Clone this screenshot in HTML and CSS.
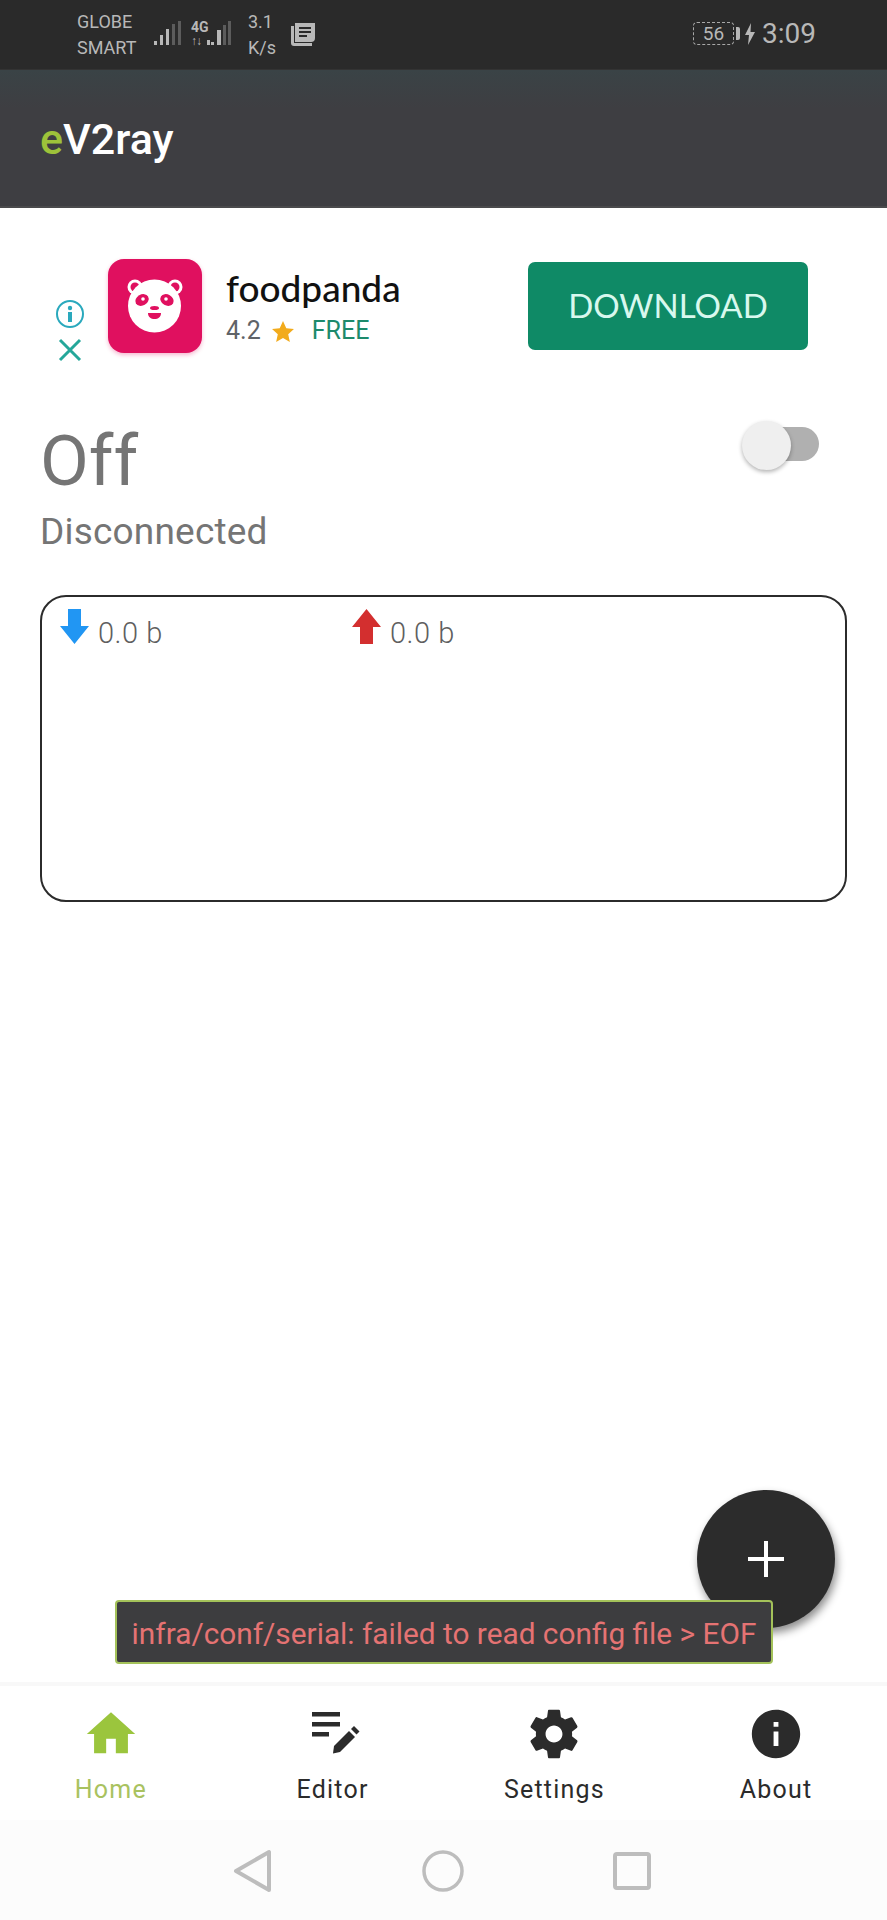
FILE: index.html
```html
<!DOCTYPE html>
<html lang="en">
<head>
  <meta charset="UTF-8">
  <meta name="viewport" content="width=device-width, initial-scale=1.0">
  <title>eV2ray</title>
  <link rel="stylesheet" href="styles.css">
</head>
<body>
  <div class="page">
    <div class="statusbar">
      <div class="carriers">
        <span>GLOBE</span>
        <span>SMART</span>
      </div>
      <svg class="signal" width="28" height="26" viewBox="0 0 28 26">
        <g fill="#b8b8b8">
          <rect x="0" y="20" width="3" height="4"/>
          <rect x="6" y="14" width="3" height="10"/>
          <rect x="12" y="8" width="3" height="16"/>
        </g>
        <g fill="#5c5c5c">
          <rect x="18" y="3" width="3" height="21"/>
          <rect x="24" y="0" width="3" height="24"/>
        </g>
      </svg>
      <div class="net-type">
        <span class="net-4g">4G</span>
        <span class="net-arrows">↑↓</span>
      </div>
      <svg class="signal-2" width="25" height="26" viewBox="0 0 25 26">
        <g fill="#b8b8b8">
          <rect x="1" y="19" width="3" height="5"/>
          <rect x="5" y="21" width="3" height="3"/>
          <rect x="11" y="9" width="4" height="15"/>
        </g>
        <g fill="#5c5c5c">
          <rect x="17" y="4" width="3" height="20"/>
          <rect x="22" y="0" width="3" height="24"/>
        </g>
      </svg>
      <div class="speed">
        <span>3.1</span>
        <span>K/s</span>
      </div>
      <svg class="news" width="24" height="24" viewBox="0 0 24 24">
        <path d="M0 4h3v17h18v3H3a3 3 0 0 1-3-3z" fill="#b8b8b8"/>
        <path d="M4 1h20v15a4 4 0 0 1-4 4H4z" fill="#b8b8b8"/>
        <path d="M8 5h12v2H8zM8 9h12v2H8zM8 13h8v2H8z" fill="#2a2a2a"/>
      </svg>
      <div class="status-right">
        <div class="battery">56</div>
        <div class="battery-nub"></div>
        <svg class="bolt" width="10" height="22" viewBox="0 0 10 22">
          <path d="M6 0 0 12h4l-1 10 7-13H5.500z" fill="#b8b8b8"/>
        </svg>
        <div class="clock">3:09</div>
      </div>
    </div>

    <div class="appbar">
      <h1 class="brand"><span class="brand-e">e</span>V2ray</h1>
    </div>

    <div class="main">
      <div class="ad">
        <div class="ad-marks">
          <svg width="30" height="30" viewBox="0 0 30 30">
            <circle cx="15" cy="15" r="13" fill="none" stroke="#2aa9bd" stroke-width="2"/>
            <rect x="13" y="13" width="4" height="10" fill="#2aa9bd"/>
            <circle cx="15" cy="9" r="2.200" fill="#2aa9bd"/>
          </svg>
          <svg width="24" height="24" viewBox="0 0 24 24">
            <path d="M2 2 22 22M22 2 2 22" stroke="#24a79a" stroke-width="3" fill="none"/>
          </svg>
        </div>
        <div class="ad-icon">
          <svg width="94" height="94" viewBox="0 0 94 94">
            <circle cx="27" cy="28" r="7.500" fill="#fff"/>
            <circle cx="67" cy="28" r="7.500" fill="#fff"/>
            <circle cx="27" cy="28" r="4.500" fill="#e0105f"/>
            <circle cx="67" cy="28" r="4.500" fill="#e0105f"/>
            <circle cx="46.500" cy="47" r="26.500" fill="#fff"/>
            <ellipse cx="34" cy="41" rx="7" ry="5.500" transform="rotate(-30 34 41)" fill="#e0105f"/>
            <ellipse cx="59" cy="41" rx="7" ry="5.500" transform="rotate(30 59 41)" fill="#e0105f"/>
            <circle cx="35" cy="40" r="1.800" fill="#fff"/>
            <circle cx="58" cy="40" r="1.800" fill="#fff"/>
            <ellipse cx="46.500" cy="49" rx="4.500" ry="2" fill="#e0105f"/>
            <path d="M40 54h13c0 4-3 6-6.500 6S40 58 40 54z" fill="#e0105f"/>
          </svg>
        </div>
        <div class="ad-text">
          <div class="ad-name">foodpanda</div>
          <div class="ad-meta">
            <span class="ad-rating">4.2</span>
            <svg class="ad-star" width="22" height="21" viewBox="0 0 24 23">
              <path d="M12 0l3.600 8 8.400.800-6.300 5.700L19.500 23 12 18.500 4.500 23l1.800-8.500L0 8.800 8.400 8z" fill="#f2ab1c"/>
            </svg>
            <span class="ad-free">FREE</span>
          </div>
        </div>
        <div class="ad-button">DOWNLOAD</div>
      </div>

      <div class="connection">
        <div>
          <div class="conn-state">Off</div>
          <div class="conn-detail">Disconnected</div>
        </div>
        <div class="toggle">
          <div class="toggle-thumb"></div>
        </div>
      </div>

      <div class="traffic">
        <div class="traffic-item">
          <svg width="29" height="35" viewBox="0 0 29 35">
            <path d="M8 0h13v17h8L14.500 35 0 17h8z" fill="#2196f3"/>
          </svg>
          <span>0.0 b</span>
        </div>
        <div class="traffic-item">
          <svg width="29" height="35" viewBox="0 0 29 35">
            <path d="M8 35h13V18h8L14.500 0 0 18h8z" fill="#d32f2f"/>
          </svg>
          <span>0.0 b</span>
        </div>
      </div>

      <div class="fab">
        <svg width="36" height="36" viewBox="0 0 36 36">
          <path d="M16 0h4v16h16v4H20v16h-4V20H0v-4h16z" fill="#fff"/>
        </svg>
      </div>
      <div class="toast">infra/conf/serial: failed to read config file &gt; EOF</div>
    </div>

    <div class="tabs">
      <div class="tab tab-active">
        <svg width="58" height="58" viewBox="0 0 24 24">
          <path d="M10 20v-6h4v6h5v-8h3L12 3 2 12h3v8z" fill="#9bc53d"/>
        </svg>
        <span>Home</span>
      </div>
      <div class="tab">
        <svg width="58" height="58" viewBox="0 0 58 58">
          <path d="M8 7h28v4.500H8zM8 17h28v4.500H8zM8 27h17v4.500H8z" fill="#2b2b2b"/>
          <path d="M30 41l15-15 6 6-15 15-7 1.500z" fill="#2b2b2b"/>
          <path d="M47 24l3-3 5.500 5.500-3 3z" fill="#2b2b2b"/>
        </svg>
        <span>Editor</span>
      </div>
      <div class="tab">
        <svg width="58" height="58" viewBox="0 0 24 24">
          <path d="M19.430 12.980c.04-.32.07-.64.07-.98s-.03-.66-.07-.98l2.110-1.650c.19-.15.24-.42.12-.64l-2-3.460c-.12-.22-.39-.3-.61-.22l-2.490 1c-.52-.4-1.080-.73-1.690-.98l-.38-2.650A.488.488 0 0 0 14 2h-4c-.25 0-.46.18-.49.420l-.38 2.650c-.61.25-1.170.59-1.690.98l-2.490-1c-.23-.09-.49 0-.61.220l-2 3.460c-.13.220-.07.490.12.640l2.110 1.650c-.04.32-.07.650-.07.980s.03.660.07.980l-2.110 1.650c-.19.150-.24.420-.12.640l2 3.460c.12.220.39.300.61.220l2.490-1c.52.400 1.080.730 1.690.980l.38 2.650c.03.240.24.420.49.420h4c.25 0 .46-.18.49-.42l.38-2.650c.61-.25 1.170-.59 1.690-.98l2.490 1c.23.090.49 0 .61-.22l2-3.460c.12-.22.07-.49-.12-.64l-2.110-1.650zM12 15.500c-1.930 0-3.500-1.570-3.500-3.500s1.570-3.500 3.500-3.500 3.500 1.570 3.500 3.500-1.570 3.500-3.500 3.500z" fill="#2b2b2b"/>
        </svg>
        <span>Settings</span>
      </div>
      <div class="tab">
        <svg width="58" height="58" viewBox="0 0 24 24">
          <path d="M12 2C6.480 2 2 6.480 2 12s4.480 10 10 10 10-4.480 10-10S17.520 2 12 2zm1 15h-2v-6h2v6zm0-8h-2V7h2v2z" fill="#2b2b2b"/>
        </svg>
        <span>About</span>
      </div>
    </div>

    <div class="sysnav">
      <svg width="40" height="44" viewBox="0 0 40 44">
        <path d="M36 3v38L3 22z" fill="none" stroke="#bdbdbd" stroke-width="4" stroke-linejoin="round"/>
      </svg>
      <svg width="42" height="42" viewBox="0 0 42 42">
        <circle cx="21" cy="21" r="19" fill="none" stroke="#bdbdbd" stroke-width="3.500"/>
      </svg>
      <svg width="38" height="38" viewBox="0 0 38 38">
        <rect x="2" y="2" width="34" height="34" rx="2" fill="none" stroke="#bdbdbd" stroke-width="4"/>
      </svg>
    </div>
  </div>
</body>
</html>
```

FILE: styles.css
```css
* {
  box-sizing: border-box;
}

body {
  margin: 0;
  font-family: Roboto, 'Liberation Sans', sans-serif;
  background: #fff;
}

.page {
  display: flex;
  flex-direction: column;
  height: 1920px;
  overflow: hidden;
}

/* status bar */
.statusbar {
  display: flex;
  align-items: center;
  flex: 0 0 70px;
  padding-left: 77px;
  padding-right: 71px;
  background: #2a2a2a;
  border-bottom: 1px solid #333;
  color: #b8b8b8;
}

.carriers,
.speed {
  display: flex;
  flex-direction: column;
  gap: 8px;
  font-size: 18px;
  line-height: 18px;
}

.carriers {
  width: 77px;
  margin-top: 1px;
}

.signal {
  margin-right: 9px;
  margin-bottom: 2px;
}

.net-type {
  display: flex;
  flex-direction: column;
  width: 15px;
  font-size: 14px;
  line-height: 14px;
  font-weight: 700;
  white-space: nowrap;
  margin-bottom: 2px;
}

.net-arrows {
  font-size: 12px;
  letter-spacing: -1px;
}

.signal-2 {
  margin-right: 17px;
  margin-bottom: 2px;
}

.speed {
  width: 43px;
  margin-top: 1px;
}

.news {
  margin-bottom: 2px;
}

.status-right {
  display: flex;
  align-items: center;
  margin-left: auto;
  margin-bottom: 2px;
}

.battery {
  width: 41px;
  height: 23px;
  border: 1px dashed #a8a8a8;
  border-radius: 4px;
  font-size: 19px;
  line-height: 21px;
  text-align: center;
}

.battery-nub {
  width: 4px;
  height: 13px;
  margin-left: 2px;
  background: #b8b8b8;
  border-radius: 0 2px 2px 0;
}

.bolt {
  margin-left: 5px;
  margin-right: 7px;
}

.clock {
  font-size: 28px;
  line-height: 28px;
}

/* app bar */
.appbar {
  display: flex;
  align-items: center;
  flex: 0 0 138px;
  padding-left: 40px;
  padding-top: 2px;
  background: linear-gradient(#3a4346, #3e3e42 28%);
  border-bottom: 2px solid #4a4a4c;
}

.brand {
  margin: 0;
  font-size: 43px;
  font-weight: 500;
  color: #fff;
  line-height: 1;
}

.brand-e {
  color: #9dc23a;
}

/* content */
.main {
  position: relative;
  flex: 1;
  padding: 0 40px;
}

.ad {
  display: flex;
  height: 103px;
  margin-top: 51px;
  padding-left: 15px;
}

.ad-marks {
  display: flex;
  flex-direction: column;
  align-items: center;
  align-self: flex-end;
  gap: 9px;
  width: 30px;
}

.ad-icon {
  width: 94px;
  height: 94px;
  margin-left: 23px;
  background: #e0105f;
  border-radius: 16px;
  box-shadow: 0 2px 4px rgba(224, 16, 95, 0.3);
}

.ad-text {
  margin-left: 24px;
  padding-top: 9px;
}

.ad-name {
  font-family: Lato, 'Noto Sans', sans-serif;
  font-size: 37px;
  line-height: 40px;
  font-weight: 500;
  color: #111;
}

.ad-meta {
  display: flex;
  align-items: center;
  margin-top: 8px;
  font-size: 25px;
  line-height: 30px;
}

.ad-rating {
  color: #5f6368;
}

.ad-star {
  margin-left: 11px;
  margin-right: 18px;
}

.ad-free {
  color: #1c8a6c;
}

.ad-button {
  align-self: flex-start;
  width: 280px;
  height: 88px;
  margin-top: 3px;
  margin-left: auto;
  margin-right: 39px;
  background: #0f8a66;
  border-radius: 7px;
  color: #d8f8ee;
  font-family: Lato, 'Noto Sans', sans-serif;
  font-size: 33px;
  font-weight: 400;
  line-height: 86px;
  text-align: center;
}

.connection {
  display: flex;
  justify-content: space-between;
  margin-top: 56px;
}

.conn-state {
  font-size: 71px;
  line-height: 86px;
  color: #757575;
}

.conn-detail {
  margin-top: 6px;
  font-size: 37px;
  letter-spacing: 0.2px;
  line-height: 44px;
  color: #757575;
}

.toggle {
  position: relative;
  width: 68px;
  height: 34px;
  margin-top: 9px;
  margin-right: 28px;
  background: #b0b0b0;
  border-radius: 17px;
}

.toggle-thumb {
  position: absolute;
  left: -9px;
  top: -6px;
  width: 49px;
  height: 49px;
  background: #efefef;
  border-radius: 50%;
  box-shadow: 0 2px 4px rgba(0, 0, 0, 0.3);
}

.traffic {
  display: flex;
  align-items: flex-start;
  height: 307px;
  margin-top: 41px;
  padding: 12px 18px;
  border: 2.500px solid #2b2b2b;
  border-radius: 26px;
}

.traffic-item {
  display: flex;
  align-items: flex-end;
  gap: 9px;
  width: 292px;
  font-size: 29px;
  font-weight: 300;
  letter-spacing: 0.5px;
  color: #5f5f5f;
  line-height: 30px;
}

.traffic-item span {
  position: relative;
  top: 4px;
}

.fab {
  position: absolute;
  right: 52px;
  bottom: 54px;
  display: flex;
  align-items: center;
  justify-content: center;
  width: 138px;
  height: 138px;
  background: #2c2c2c;
  border-radius: 50%;
  box-shadow: 2px 5px 9px rgba(0, 0, 0, 0.45);
}

.toast {
  position: absolute;
  left: 115px;
  right: 114px;
  bottom: 18px;
  height: 64px;
  background: #3d3d3f;
  border: 2px solid #a4c25a;
  border-radius: 4px;
  color: #e57373;
  font-size: 29.800px;
  line-height: 63px;
  text-align: center;
  white-space: nowrap;
}

/* bottom navigation */
.tabs {
  display: grid;
  grid-template-columns: repeat(4, 1fr);
  flex: 0 0 138px;
  background: #fff;
  border-top: 4px solid #f8f8f8;
}

.tab {
  display: flex;
  flex-direction: column;
  align-items: center;
  padding-top: 19px;
  color: #2b2b2b;
  font-size: 25px;
  letter-spacing: 1.200px;
  line-height: 30px;
}

.tab span {
  margin-top: 12px;
}

.tab-active {
  color: #a9c25f;
}

.sysnav {
  display: flex;
  align-items: center;
  justify-content: center;
  gap: 149px;
  flex: 0 0 100px;
  padding-top: 2px;
  padding-right: 3px;
  background: #fcfcfc;
}
```
